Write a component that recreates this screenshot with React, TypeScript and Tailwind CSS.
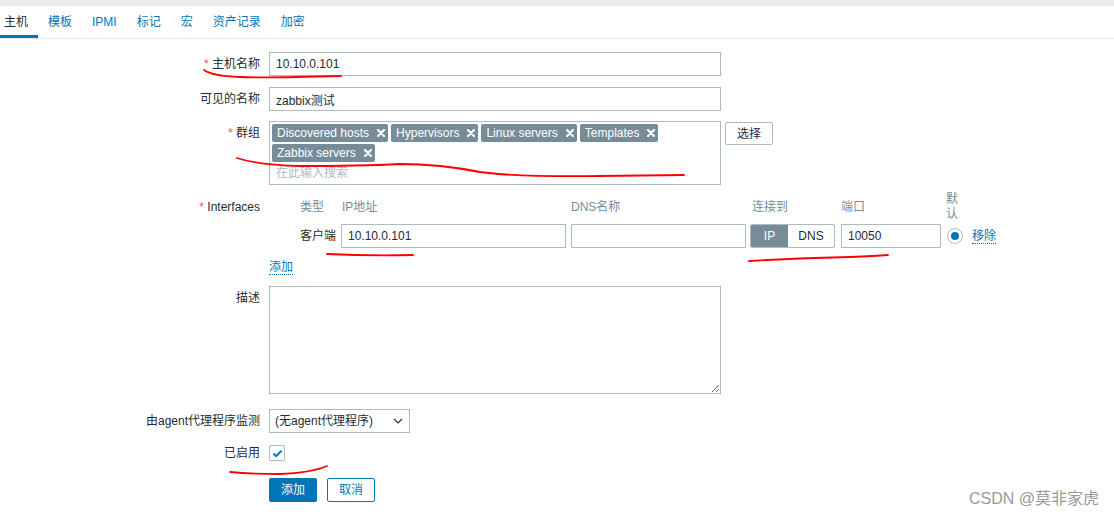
import type { ReactNode } from 'react'

const tabs = ['主机', '模板', 'IPMI', '标记', '宏', '资产记录', '加密']
const groups = ['Discovered hosts', 'Hypervisors', 'Linux servers', 'Templates', 'Zabbix servers']

function Row({
  label,
  required,
  labelClass = 'pt-[5px]',
  className = '',
  children,
}: {
  label: string
  required?: boolean
  labelClass?: string
  className?: string
  children: ReactNode
}) {
  return (
    <div className={`flex ${className}`}>
      <div className={`w-[260px] shrink-0 text-right leading-[14px] ${labelClass}`}>
        {required && <span className="text-[#e45959]">* </span>}
        {label}
      </div>
      <div className="ml-[9px]">{children}</div>
    </div>
  )
}

function Tag({ name }: { name: string }) {
  return (
    <div className="flex h-[18px] items-center rounded-[2px] bg-[#768d99] pl-[5px] pr-[3px] text-white">
      <span className="leading-[14px]">{name}</span>
      <svg className="ml-[8px]" width="8" height="8" viewBox="0 0 8 8">
        <path d="M1 1L7 7M7 1L1 7" stroke="white" strokeWidth="2.2" strokeLinecap="round" />
      </svg>
    </div>
  )
}

function TextInput({ value, w }: { value: string; w: string }) {
  return (
    <input
      readOnly
      value={value}
      className={`${w} h-[24px] border border-[#acbbc2] bg-white px-[6px] text-[12px] text-[#1f2c33] outline-none`}
    />
  )
}

export default function App() {
  return (
    <div className="relative h-[516px] w-full overflow-hidden bg-white font-['Liberation_Sans','Noto_Sans_CJK_SC',sans-serif] text-[12px] text-[#1f2c33]">
      {/* top strip */}
      <div className="h-[6px] bg-[#e8ebed]" />

      {/* Tabs */}
      <div className="flex h-[33px] border-b border-[#ebeef0]">
        {tabs.map((t, i) => (
          <div
            key={t}
            className={`flex items-center leading-[14px] ${
              i === 0
                ? 'border-b-[3px] border-[#0275b8] pl-[4px] pr-[10px] pt-[3px]'
                : 'px-[10px] text-[#0275b8]'
            }`}
          >
            {t}
          </div>
        ))}
      </div>

      {/* Form */}
      <div className="pt-[13px]">
        <Row label="主机名称" required>
          <TextInput value="10.10.0.101" w="w-[452px]" />
        </Row>

        <Row label="可见的名称" className="mt-[11px]">
          <TextInput value="zabbix测试" w="w-[452px]" />
        </Row>

        <Row label="群组" required className="mt-[10px]">
          <div className="flex">
            <div className="h-[64px] w-[452px] border border-[#acbbc2] p-[2px]">
              <div className="flex flex-wrap gap-x-[3px] gap-y-[2px]">
                {groups.map((g) => (
                  <Tag key={g} name={g} />
                ))}
              </div>
              <div className="mt-[4px] pl-[4px] leading-[14px] text-[#acbbc2]">在此输入搜索</div>
            </div>
            <button className="ml-[4px] mt-[1px] h-[23px] rounded-[2px] border border-[#acbbc2] bg-white px-[11px] text-[12px] text-[#1f2c33]">
              选择
            </button>
          </div>
        </Row>

        <Row label="Interfaces" required labelClass="pt-[8px]" className="mt-[7px]">
          <div className="pl-[31px]">
            <div className="grid grid-cols-[41px_230px_179px_91px_105px_20px_auto] items-center">
              <div className="flex h-[30px] items-center text-[#768d99]">类型</div>
              <div className="pl-[1px] text-[#768d99]">IP地址</div>
              <div className="text-[#768d99]">DNS名称</div>
              <div className="pl-[2px] text-[#768d99]">连接到</div>
              <div className="text-[#768d99]">端口</div>
              <div className="leading-[15px] text-[#768d99]">默认</div>
              <div />

              <div className="mt-[2px] leading-[14px]">客户端</div>
              <div className="mt-[2px]">
                <TextInput value="10.10.0.101" w="w-[225px]" />
              </div>
              <div className="mt-[2px]">
                <TextInput value="" w="w-[175px]" />
              </div>
              <div className="mt-[2px] flex h-[24px] w-[85px] overflow-hidden rounded-[2px] border border-[#acbbc2]">
                <div className="flex w-[37px] items-center justify-center bg-[#768d99] text-white">IP</div>
                <div className="flex flex-1 items-center justify-center">DNS</div>
              </div>
              <div className="mt-[2px]">
                <TextInput value="10050" w="w-[100px]" />
              </div>
              <div className="mt-[2px] flex items-center">
                <div className="ml-[1px] flex h-[16px] w-[16px] items-center justify-center rounded-full border border-[#acbbc2]">
                  <div className="h-[8px] w-[8px] rounded-full bg-[#0275b8]" />
                </div>
              </div>
              <div className="mt-[2px] pl-[6px]">
                <span className="border-b border-dotted border-[#0275b8] leading-[14px] text-[#0275b8]">移除</span>
              </div>
            </div>
          </div>
          <div className="mt-[12px] leading-[14px]">
            <span className="border-b border-dotted border-[#0275b8] text-[#0275b8]">添加</span>
          </div>
        </Row>

        <Row label="描述" className="mt-[12px]">
          <textarea readOnly className="block h-[108px] w-[452px] border border-[#acbbc2] outline-none" />
        </Row>

        <Row label="由agent代理程序监测" className="mt-[15px]">
          <div className="flex h-[24px] w-[141px] items-center justify-between border border-[#acbbc2] pl-[5px] pr-[6px]">
            <span className="leading-[14px]">(无agent代理程序)</span>
            <svg width="10" height="6" viewBox="0 0 10 6">
              <path d="M1 1L5 5L9 1" fill="none" stroke="#1f2c33" strokeWidth="1.1" />
            </svg>
          </div>
        </Row>

        <Row label="已启用" className="mt-[8px]">
          <div className="flex h-[24px] items-center">
            <div className="flex h-[16px] w-[16px] items-center justify-center rounded-[2px] border border-[#acbbc2]">
              <svg width="11" height="9" viewBox="0 0 11 9">
                <path d="M1.5 4.5L4.2 7.2L9.5 1.8" fill="none" stroke="#0275b8" strokeWidth="2" />
              </svg>
            </div>
          </div>
        </Row>

        <div className="ml-[269px] mt-[13px] flex gap-[10px]">
          <button className="h-[24px] w-[48px] rounded-[2px] bg-[#0275b8] text-[12px] text-white">添加</button>
          <button className="h-[24px] w-[48px] rounded-[2px] border border-[#0275b8] bg-white text-[12px] text-[#0275b8]">
            取消
          </button>
        </div>
      </div>

      {/* red hand annotations */}
      <svg className="pointer-events-none absolute left-0 top-0" width="1114" height="516" viewBox="0 0 1114 516">
        <g fill="none" stroke="#ff0000" strokeWidth="1.8" strokeLinecap="round">
          <path d="M204 70 Q212 76 240 77 T341 76" />
          <path d="M237 158 Q258 165 300 166 Q360 166 400 164 Q440 164 480 172 Q515 177 600 176 L684 175" />
          <path d="M327 254 Q370 256 413 255" />
          <path d="M749 261 Q800 258 850 257 Q875 256 888 255" />
          <path d="M230 472 Q250 474 280 474 Q310 473 327 466" />
        </g>
      </svg>

      {/* watermark */}
      <div className="absolute bottom-[8px] right-[15px] text-[16px] leading-[18px] text-[#9a9a9a]">CSDN @莫非家虎</div>
    </div>
  )
}
